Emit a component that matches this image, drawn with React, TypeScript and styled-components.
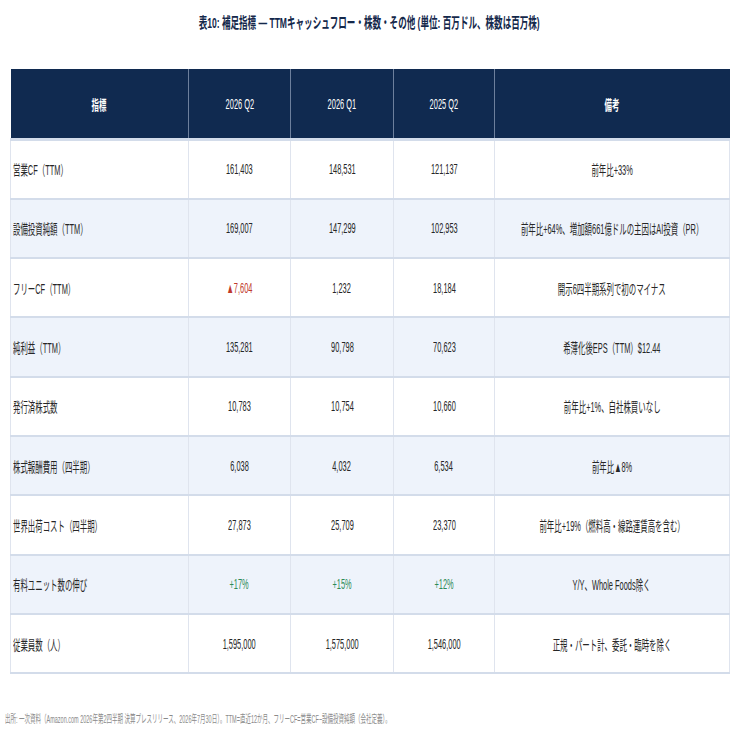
import React from "react";
import styled, { createGlobalStyle } from "styled-components";

const Global = createGlobalStyle`
  html, body { margin: 0; padding: 0; background: #ffffff; overflow: hidden; }
  body { font-family: "Liberation Sans", "Noto Sans CJK JP", sans-serif; }
`;

const Page = styled.div`
  width: 738px;
  height: 738px;
  box-sizing: border-box;
  padding: 10px 9px 0 10px;
  display: flex;
  flex-direction: column;
  overflow: hidden;
`;

const Title = styled.h1`
  margin: 0;
  height: 22px;
  display: flex;
  justify-content: center;
  align-items: center;
  font-size: 15px;
  font-weight: 700;
  color: #14284b;
`;

const Squeeze = styled.span<{ $origin?: string; $scale?: number }>`
  display: inline-block;
  flex: none;
  white-space: nowrap;
  transform: scaleX(${(p) => p.$scale ?? 0.53});
  transform-origin: ${(p) => p.$origin ?? "center"};
`;

const Inner = styled.div<{ $left?: boolean }>`
  display: flex;
  align-items: center;
  justify-content: ${(p) => (p.$left ? "flex-start" : "center")};
  width: 100%;
  overflow: hidden;
`;

const Table = styled.table`
  margin-top: 37px;
  width: 719px;
  border-collapse: collapse;
  table-layout: fixed;
  font-size: 14px;
  color: #262626;
`;

const HeadCell = styled.th`
  height: 69px;
  padding: 0;
  background: #102a50;
  color: #ffffff;
  font-weight: 400;
  text-align: center;
  border-left: 1px solid #6d7f9c;
  border-bottom: 3px solid #d3dcea;
  &:first-child { border-left: none; }
`;

const HeadLabel = styled(Squeeze)<{ $cjk?: boolean }>`
  font-weight: ${(p) => (p.$cjk ? 700 : 400)};
`;

const Row = styled.tr<{ $alt: boolean }>`
  height: 59.3px;
  background: ${(p) => (p.$alt ? "#eef3fb" : "#ffffff")};
  border-bottom: 2px solid #d3dcea;
`;

const Cell = styled.td<{ $left?: boolean; $tone?: "red" | "green" }>`
  padding: 0 ${(p) => (p.$left ? "2px" : "0")};
  border-left: 1px solid #dfe4ee;
  border-right: 1px solid #dfe4ee;
  color: ${(p) =>
    p.$tone === "red" ? "#c0392b" : p.$tone === "green" ? "#2e8b57" : "#262626"};
`;

const Note = styled.div`
  margin: 36px 0 0 -5px;
  font-size: 11px;
  color: #8a8a8a;
  overflow: hidden;
`;

type Tone = "red" | "green" | undefined;
type R = { label: string; vals: [string, string, string]; note: string; tones?: [Tone, Tone, Tone] };

const rows: R[] = [
  { label: "営業CF（TTM）", vals: ["161,403", "148,531", "121,137"], note: "前年比+33%" },
  { label: "設備投資純額（TTM）", vals: ["169,007", "147,299", "102,953"], note: "前年比+64%、増加額661億ドルの主因はAI投資（PR）" },
  { label: "フリーCF（TTM）", vals: ["▲7,604", "1,232", "18,184"], note: "開示6四半期系列で初のマイナス", tones: ["red", undefined, undefined] },
  { label: "純利益（TTM）", vals: ["135,281", "90,798", "70,623"], note: "希薄化後EPS（TTM）$12.44" },
  { label: "発行済株式数", vals: ["10,783", "10,754", "10,660"], note: "前年比+1%、自社株買いなし" },
  { label: "株式報酬費用（四半期）", vals: ["6,038", "4,032", "6,534"], note: "前年比▲8%" },
  { label: "世界出荷コスト（四半期）", vals: ["27,873", "25,709", "23,370"], note: "前年比+19%（燃料高・線路運賃高を含む）" },
  { label: "有料ユニット数の伸び", vals: ["+17%", "+15%", "+12%"], note: "Y/Y、Whole Foods除く", tones: ["green", "green", "green"] },
  { label: "従業員数（人）", vals: ["1,595,000", "1,575,000", "1,546,000"], note: "正規・パート計、委託・臨時を除く" },
];

const widths = [178, 102, 103, 101, 235];
const heads: { text: string; cjk?: boolean }[] = [
  { text: "指標", cjk: true },
  { text: "2026 Q2" },
  { text: "2026 Q1" },
  { text: "2025 Q2" },
  { text: "備考", cjk: true },
];

export default function App() {
  return (
    <>
      <Global />
      <Page>
        <Title>
          <Squeeze $scale={0.57}>
            表10: 補足指標 — TTMキャッシュフロー・株数・その他 (単位: 百万ドル、株数は百万株)
          </Squeeze>
        </Title>
        <Table>
          <colgroup>
            {widths.map((w, i) => (
              <col key={i} style={{ width: w }} />
            ))}
          </colgroup>
          <thead>
            <tr>
              {heads.map((h) => (
                <HeadCell key={h.text}>
                  <Inner>
                    <HeadLabel $cjk={h.cjk}>{h.text}</HeadLabel>
                  </Inner>
                </HeadCell>
              ))}
            </tr>
          </thead>
          <tbody>
            {rows.map((r, i) => (
              <Row key={r.label} $alt={i % 2 === 1}>
                <Cell $left>
                  <Inner $left>
                    <Squeeze $origin="left">{r.label}</Squeeze>
                  </Inner>
                </Cell>
                {r.vals.map((v, j) => (
                  <Cell key={j} $tone={r.tones?.[j]}>
                    <Inner>
                      <Squeeze>{v}</Squeeze>
                    </Inner>
                  </Cell>
                ))}
                <Cell>
                  <Inner>
                    <Squeeze>{r.note}</Squeeze>
                  </Inner>
                </Cell>
              </Row>
            ))}
          </tbody>
        </Table>
        <Note>
          <Squeeze $origin="left" $scale={0.5}>
            出所: 一次資料（Amazon.com 2026年第2四半期 決算プレスリリース、2026年7月30日）。TTM=直近12か月、フリーCF=営業CF−設備投資純額（会社定義）。
          </Squeeze>
        </Note>
      </Page>
    </>
  );
}
